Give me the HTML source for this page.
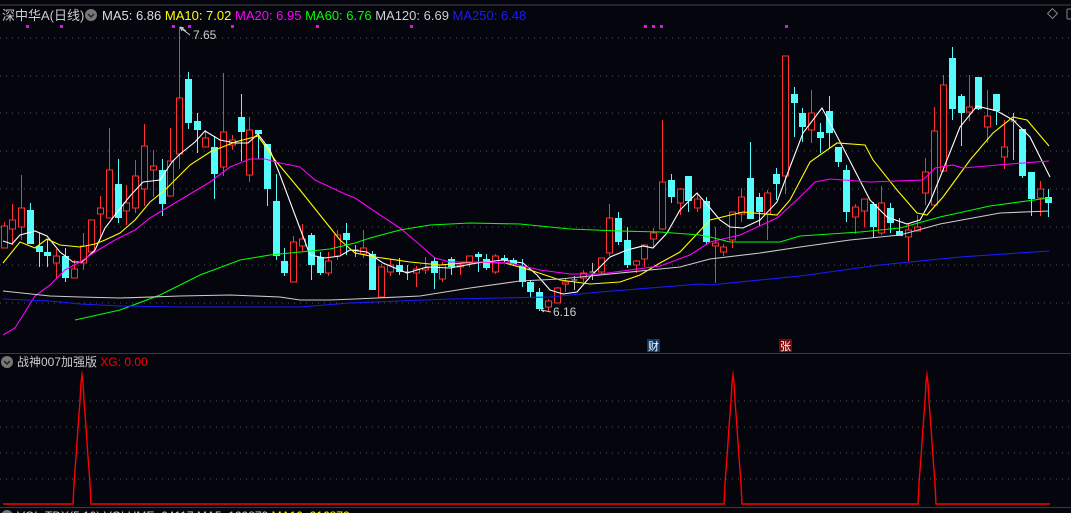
<!DOCTYPE html>
<html><head><meta charset="utf-8"><style>
html,body{margin:0;padding:0;background:#05050d;width:1071px;height:513px;overflow:hidden}
svg{display:block}
text{font-family:"Liberation Sans","Noto Sans CJK SC",sans-serif}
</style></head><body>
<svg id="s" width="1071" height="513" xmlns="http://www.w3.org/2000/svg">
<rect width="1071" height="513" fill="#05050d"/>
<line x1="0" y1="5" x2="1071" y2="5" stroke="#444" stroke-width="1"/>
<g stroke="#555" stroke-dasharray="1 5" stroke-width="1">
<line x1="0" y1="38" x2="1071" y2="38"/>
<line x1="0" y1="76" x2="1071" y2="76"/>
<line x1="0" y1="113" x2="1071" y2="113"/>
<line x1="0" y1="151" x2="1071" y2="151"/>
<line x1="0" y1="189" x2="1071" y2="189"/>
<line x1="0" y1="227" x2="1071" y2="227"/>
<line x1="0" y1="265" x2="1071" y2="265"/>
<line x1="0" y1="303" x2="1071" y2="303"/>
<line x1="0" y1="401" x2="1071" y2="401"/>
<line x1="0" y1="427" x2="1071" y2="427"/>
<line x1="0" y1="453" x2="1071" y2="453"/>
<line x1="0" y1="479" x2="1071" y2="479"/>
</g>
<line x1="0" y1="353.5" x2="1071" y2="353.5" stroke="#3a3a3a"/>
<line x1="0" y1="507.5" x2="1071" y2="507.5" stroke="#3a3a3a"/>
<g id="c"></g>
<g id="m" fill="none" stroke-width="1.1"></g>
<g fill="#e010e0">
<rect x="26" y="25" width="3" height="3"/><rect x="60" y="25" width="3" height="3"/><rect x="172" y="25" width="3" height="3"/><rect x="188" y="25" width="3" height="3"/><rect x="231" y="25" width="3" height="3"/><rect x="316" y="25" width="3" height="3"/><rect x="410" y="25" width="3" height="3"/><rect x="644" y="25" width="3" height="3"/><rect x="652" y="25" width="3" height="3"/><rect x="660" y="25" width="3" height="3"/><rect x="785" y="25" width="3" height="3"/>
</g>
<path d="M180 27 l6 4 M180 27 l2 4 M180 27 l4 1 M182 29 l8 6" stroke="#ccc" fill="none"/>
<text x="193" y="39" fill="#ccc" font-size="12">7.65</text>
<path d="M541 310 l10 2 M541 310 l3 -2 M541 310 l3 2" stroke="#ccc" fill="none"/>
<text x="553" y="316" fill="#ccc" font-size="12">6.16</text>
<rect x="647" y="339" width="13" height="13" fill="#0d3a6a"/>
<text x="648" y="350" fill="#fff" font-size="11">财</text>
<rect x="779" y="339" width="13" height="13" fill="#7a0a0a"/>
<text x="780" y="350" fill="#fff" font-size="11">张</text>
<path id="xg" fill="none" stroke="#f00" stroke-width="1.4" stroke-linejoin="miter" stroke-miterlimit="20"/>
<text x="2" y="20" font-size="13" fill="#ccc">深中华A(日线)</text>
<circle cx="91" cy="15" r="6" fill="#777"/><path d="M88 14 l3 3 l3 -3" stroke="#222" stroke-width="1.5" fill="none"/>
<text x="102" y="20" font-size="13"><tspan fill="#ddd">MA5: 6.86 </tspan><tspan fill="#ff0">MA10: 7.02 </tspan><tspan fill="#f0f">MA20: 6.95 </tspan><tspan fill="#0f0">MA60: 6.76 </tspan><tspan fill="#ccc">MA120: 6.69 </tspan><tspan fill="#1a1aff">MA250: 6.48</tspan></text>
<rect x="1049" y="10" width="7" height="7" fill="none" stroke="#888" transform="rotate(45 1052.5 13.5)"/>
<rect x="1067" y="9" width="6" height="10" rx="1" fill="none" stroke="#888"/>
<circle cx="7" cy="362" r="6" fill="#777"/><path d="M4 361 l3 3 l3 -3" stroke="#222" stroke-width="1.5" fill="none"/>
<text x="17" y="366" font-size="12"><tspan fill="#ccc">战神007加强版 </tspan><tspan fill="#f00">XG: 0.00</tspan></text>
<circle cx="7" cy="516" r="6" fill="#777"/>
<text x="17" y="520" font-size="12"><tspan fill="#ccc">VOL-TDX(5,10) VOLUME: 64117 MA5: 120872 </tspan><tspan fill="#ff0">MA10: 216872</tspan></text>
</svg>
<script>
var C=[
['r',226,248,222,248],['r',220,229,204,245],['r',208,227,175,240],['c',210,244,203,244],['c',246,252,233,267],['c',252,256,239,267],['r',256,263,249,278],['c',256,278,248,282],['r',269,278,260,278],['r',246,263,233,270],
['r',220,252,220,252],['r',208,214,196,239],['r',170,218,128,218],['c',184,218,159,223],['r',203,211,185,225],['r',176,208,160,213],['r',146,189,124,206],['r',166,170,150,197],['c',170,204,159,216],['r',161,196,128,196],
['r',98,154,27,169],['c',79,123,72,129],['c',121,130,113,153],['r',138,147,130,147],['c',147,174,136,199],['r',132,167,73,176],['r',140,145,135,150],['c',117,132,94,161],['r',130,175,117,182],['c',130,134,130,159],
['c',144,189,144,206],['c',201,256,174,260],['c',261,273,248,276],['r',242,282,236,282],['r',239,246,224,251],['c',235,265,233,280],['c',257,273,252,275],['r',261,273,252,276],['r',235,256,230,260],['c',233,240,223,255],
['g',250,251,245,257],['r',248,254,230,258],['c',254,290,251,290],['r',267,297,264,297],['r',265,272,259,276],['c',265,272,258,275],['g',272,273,265,280],['r',269,273,266,287],['r',268,270,257,274],['c',261,273,257,289],
['r',265,279,262,282],['c',259,267,257,275],['r',265,267,263,275],['r',256,263,256,267],['c',254,257,252,272],['c',259,268,254,270],['r',256,272,254,274],['c',258,260,255,262],['c',260,264,258,266],['c',266,282,259,287],
['c',282,292,280,297],['c',292,309,288,311],['r',301,307,299,311],['r',288,303,287,303],['r',282,284,278,292],['g',280,281,276,290],['r',273,278,270,282],['g',272,275,263,280],['r',258,272,258,274],['r',218,253,204,256],
['c',218,242,212,245],['c',240,265,227,268],['r',261,265,260,273],['r',245,259,245,267],['r',233,239,228,247],['r',182,229,120,230],['c',180,197,174,203],['r',189,203,188,215],['c',176,201,176,212],['r',199,208,193,212],
['c',201,242,197,245],['r',243,246,227,283],['r',247,252,244,256],['r',212,240,212,248],['r',197,214,188,222],['c',178,219,142,219],['c',197,212,193,226],['r',193,214,190,240],['c',174,184,168,200],['r',56,176,56,194],
['c',94,103,87,137],['c',113,127,108,142],['r',113,130,90,143],['c',132,138,123,153],['c',111,133,96,148],['c',147,162,147,167],['c',170,212,165,222],['r',207,217,204,234],['r',199,211,199,227],['c',204,227,202,238],
['r',203,233,186,235],['c',208,223,203,233],['c',231,236,218,236],['r',230,237,224,261],['r',227,231,215,231],['r',172,193,158,205],['r',131,205,107,207],['r',85,171,75,172],['c',58,109,47,120],['c',96,113,94,146],
['r',107,112,75,121],['c',77,109,77,110],['r',116,127,90,143],['c',94,111,94,125],['r',147,157,120,169],['g',121,122,113,160],['c',129,176,129,178],['c',172,199,172,216],['r',189,198,181,216],['c',197,203,189,217]];
var g='';
C.forEach(function(d,i){var x=Math.round(3.5+8.78*i)+0.5;var col=d[0]=='r'?'#ff3030':d[0]=='c'?'#54fcfc':'#bbb';
var t=Math.min(d[1],d[2]),b=Math.max(d[1],d[2]);if(b-t<1)b=t+1;
g+='<line x1="'+x+'" y1="'+d[3]+'" x2="'+x+'" y2="'+t+'" stroke="'+col+'"/>';
g+='<line x1="'+x+'" y1="'+b+'" x2="'+x+'" y2="'+d[4]+'" stroke="'+col+'"/>';
if(d[0]=='r')g+='<rect x="'+(x-3)+'" y="'+t+'" width="6" height="'+(b-t)+'" fill="#05050d" stroke="'+col+'"/>';
else if(d[0]=='c')g+='<rect x="'+(x-3.5)+'" y="'+t+'" width="7" height="'+(b-t)+'" fill="'+col+'"/>';
else g+='<line x1="'+(x-3)+'" y1="'+t+'" x2="'+(x+3)+'" y2="'+t+'" stroke="'+col+'"/>';});
document.getElementById('c').innerHTML=g;
var M={
'#ffffff':'3,241 12,244 20,235 35,231 47,236 60,252 73,262 82,262 95,250 105,228 115,215 130,196 143,182 160,180 172,162 180,154 195,142 205,131 220,140 235,143 248,143 258,134 270,150 280,175 295,215 310,255 325,258 340,256 350,250 367,252 383,263 407,273 427,267 450,268 477,263 503,260 523,263 537,275 550,290 563,294 577,292 590,277 610,257 627,250 643,246 653,248 667,233 680,210 697,193 710,208 720,220 730,227 743,228 760,220 777,202 790,167 803,133 822,108 838,138 853,167 870,200 887,217 907,224 920,220 930,202 943,170 960,127 977,106 997,111 1013,120 1030,137 1050,177',
'#ffff00':'3,263 20,242 35,248 47,239 60,245 80,247 95,244 105,240 120,233 135,220 150,202 165,190 190,165 210,152 235,142 258,136 275,160 300,190 320,215 340,240 355,253 375,257 410,262 440,265 475,262 505,263 530,270 560,280 590,284 620,282 640,275 660,263 680,252 710,220 743,212 777,215 790,200 810,162 837,143 865,145 873,160 897,190 917,213 927,215 943,197 970,160 993,133 1013,117 1027,120 1049,146',
'#ff00ff':'3,335 15,328 25,312 35,296 50,285 65,270 80,262 95,252 115,240 135,230 150,218 170,206 190,194 210,182 230,167 250,159 265,159 280,163 300,167 315,180 330,187 345,194 355,198 380,215 400,228 420,245 435,258 450,262 480,262 510,263 540,270 570,274 600,274 630,270 660,266 690,255 710,242 740,235 777,218 800,197 815,182 830,179 870,182 923,180 935,168 953,165 963,168 1010,164 1049,161',
'#00ff00':'75,320 120,310 160,295 200,275 240,260 270,255 300,252 330,249 355,243 370,238 400,230 430,225 470,223 520,224 550,227 570,229 620,231 660,232 700,235 710,237 730,242 780,242 800,236 860,232 900,228 940,217 990,206 1049,198',
'#cccccc':'3,291 50,296 80,297 120,298 180,296 230,295 280,297 300,300 330,300 355,299 420,296 470,288 520,281 560,279 600,275 640,271 680,267 710,259 760,253 800,247 850,240 900,235 940,224 1000,213 1049,211',
'#1a1aff':'3,299 50,301 80,304 120,306 180,307 250,307 300,307 350,303 400,301 450,299 500,298 550,297 600,292 650,288 700,284 710,285 800,276 880,265 960,257 1049,251'};
var h='';for(var k in M)h+='<polyline points="'+M[k]+'" stroke="'+k+'"/>';
document.getElementById('m').innerHTML=h;
function peak(cx){var steps=[[9,504],[7.7,479],[5.7,453],[4,427],[2,401],[1,383],[0,375]];
var l='';steps.forEach(function(p){l+=' L'+(cx-p[0])+' '+p[1];});
for(var i=steps.length-2;i>=0;i--){var p=steps[i];l+=' L'+(cx+p[0])+' '+p[1];}
return l;}
document.getElementById('xg').setAttribute('d','M3 504'+peak(82)+peak(733)+peak(927)+' L1050 504');
</script>
</body></html>
